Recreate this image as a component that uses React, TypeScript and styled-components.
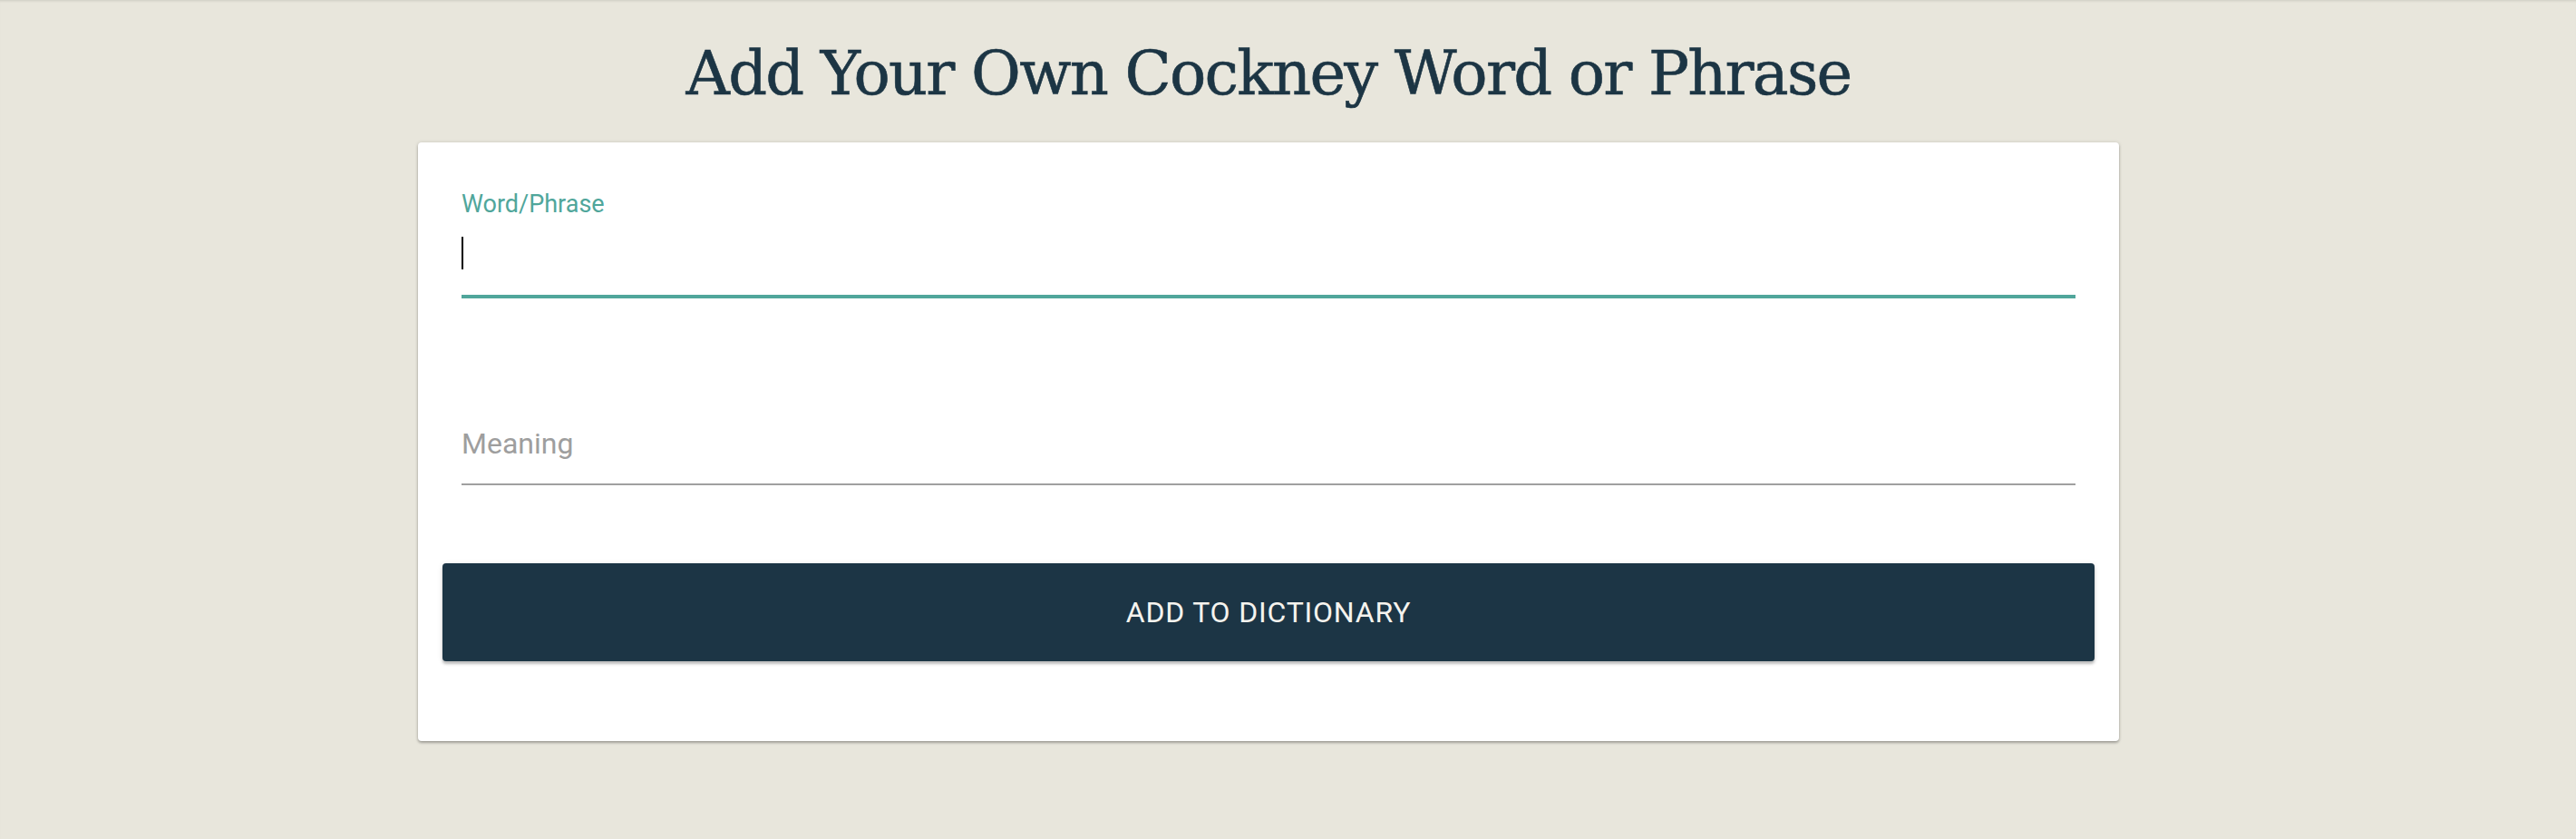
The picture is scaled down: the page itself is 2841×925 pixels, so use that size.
import styled, { createGlobalStyle } from 'styled-components';

const GlobalStyle = createGlobalStyle`
  html, body {
    margin: 0;
    padding: 0;
    background-color: #e8e6dc;
  }
`;

const Page = styled.div`
  min-height: 925px;
  box-sizing: border-box;
  padding: 31px 43px 0 0;
  display: flex;
  flex-direction: column;
  align-items: center;
  box-shadow: inset 0 3px 3px -2px rgba(0, 0, 0, 0.12);
`;

const Title = styled.h1`
  margin: 0 0 26px;
  font-family: "DejaVu Serif", "Liberation Serif", serif;
  font-weight: 400;
  font-size: 67px;
  letter-spacing: -1.8px;
  line-height: 100px;
  color: #1c3544;
  text-align: center;
  -webkit-text-stroke: 0.6px #1c3544;
`;

const Card = styled.div`
  width: 1876px;
  box-sizing: border-box;
  background: #ffffff;
  border-radius: 4px;
  padding: 52px 0 88px;
  box-shadow: 0 2px 3px rgba(0, 0, 0, 0.28), 0 0 4px rgba(0, 0, 0, 0.12);
  display: flex;
  flex-direction: column;
`;

const Field = styled.div<{ $focused?: boolean }>`
  margin: 0 48px;
  border-bottom: ${p => (p.$focused ? '4px solid #50a69b' : '2px solid #a0a0a0')};
  font-family: Roboto, "Liberation Sans", sans-serif;
`;

const FloatLabel = styled.div`
  font-size: 27px;
  line-height: 32px;
  color: #50a69b;
`;

const InputArea = styled.div`
  padding: 20px 0 28px;
  display: flex;
`;

const Caret = styled.span`
  display: block;
  width: 2px;
  height: 36px;
  background: #000000;
`;

const Placeholder = styled.div`
  font-size: 32px;
  line-height: 40px;
  color: #9e9e9e;
  padding-bottom: 24px;
`;

const FieldGap = styled.div<{ $h: number }>`
  height: ${p => p.$h}px;
`;

const SubmitButton = styled.button`
  margin: 0 27px;
  height: 108px;
  border: none;
  border-radius: 4px;
  background: #1c3545;
  color: #f5f3ee;
  font-family: Roboto, "Liberation Sans", sans-serif;
  font-size: 32px;
  font-weight: 400;
  letter-spacing: 0.8px;
  text-transform: uppercase;
  box-shadow: 0 3px 3px rgba(0, 0, 0, 0.22), 0 1px 6px rgba(0, 0, 0, 0.1);
  display: flex;
  align-items: center;
  justify-content: center;
  cursor: pointer;
`;

const App = () => {
  return (
    <>
      <GlobalStyle />
      <Page>
        <Title>Add Your Own Cockney Word or Phrase</Title>
        <Card>
          <Field $focused>
            <FloatLabel>Word/Phrase</FloatLabel>
            <InputArea>
              <Caret />
            </InputArea>
          </Field>
          <FieldGap $h={140} />
          <Field>
            <Placeholder>Meaning</Placeholder>
          </Field>
          <FieldGap $h={86} />
          <SubmitButton>Add to Dictionary</SubmitButton>
        </Card>
      </Page>
    </>
  );
};

export default App;
